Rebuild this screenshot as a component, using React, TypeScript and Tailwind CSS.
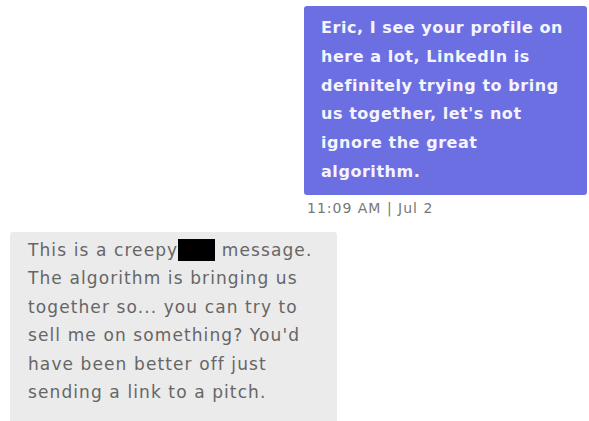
import React from "react";

export default function App() {
  const font = { fontFamily: '"DejaVu Sans", "Noto Sans", sans-serif' };
  return (
    <div className="w-[589px] h-[421px] bg-white overflow-hidden flex flex-col" style={font}>
      <div className="ml-[304px] mt-[6px] w-[283px] rounded-[3px] bg-[#6b6fe2] pl-[17px] pt-[8px] pb-[8px] text-[16px] leading-[28.8px] tracking-[0.55px] font-bold text-[#f4f4ff] whitespace-nowrap">
        Eric, I see your profile on<br />
        here a lot, LinkedIn is<br />
        definitely trying to bring<br />
        us together, let's not<br />
        ignore the great<br />
        algorithm.
      </div>
      <div className="ml-[307px] mt-[3px] text-[14px] leading-[20px] tracking-[1px] text-[#777777]">11:09 AM | Jul 2</div>
      <div className="ml-[10px] mt-[14px] w-[327px] flex-1 rounded-t-[3px] bg-[#ebebeb] pl-[18px] pt-[4px] text-[17px] leading-[28.5px] tracking-[1.1px] text-[#666666] whitespace-nowrap">
        This is a creepy<span className="inline-block w-[37px] h-[22px] bg-black align-[-5px]"></span> message.<br />
        The algorithm is bringing us<br />
        together so... you can try to<br />
        sell me on something? You'd<br />
        have been better off just<br />
        sending a link to a pitch.
      </div>
    </div>
  );
}
